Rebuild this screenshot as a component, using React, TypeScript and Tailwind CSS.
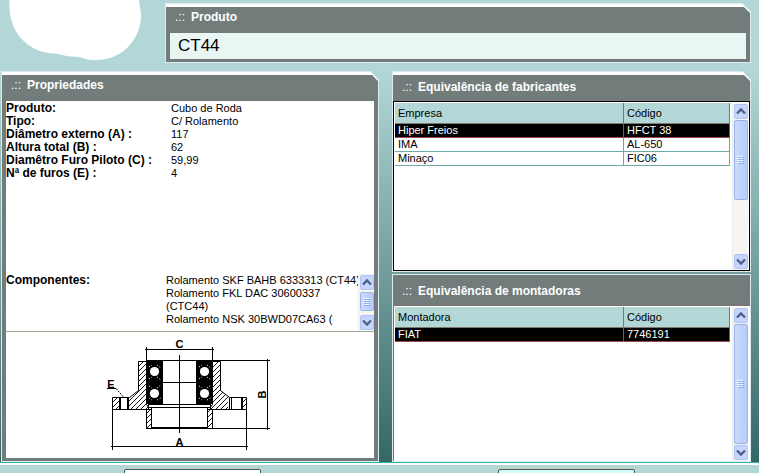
import type { ReactNode } from "react";

const outerCut =
  "[clip-path:polygon(0_0,calc(100%_-_9px)_0,100%_9px,100%_100%,0_100%)]";
const innerCut =
  "[clip-path:polygon(0_0,calc(100%_-_6px)_0,100%_6px,100%_100%,0_100%)]";

function Panel({
  id,
  title,
  cut = true,
  className = "",
  headClass = "h-[26px] pb-[6px]",
  children,
}: {
  id: string;
  title: string;
  cut?: boolean;
  className?: string;
  headClass?: string;
  children: ReactNode;
}) {
  return (
    <section
      aria-labelledby={id}
      className={`flex flex-col border border-[#dcebf2] bg-white ${cut ? `pt-[3px] ${outerCut}` : ""} ${className}`}
    >
      <div className={`flex flex-1 flex-col bg-[#727d7b] ${cut ? innerCut : ""}`}>
        <h2
          id={id}
          className={`flex shrink-0 items-center pl-[9px] text-[12px] font-bold leading-[14px] text-white ${headClass}`}
        >
          <span className="w-4 font-normal">.::</span>
          {title}
        </h2>
        {children}
      </div>
    </section>
  );
}

function Arrow({ up = false }: { up?: boolean }) {
  return (
    <button
      type="button"
      aria-label={up ? "Rolar para cima" : "Rolar para baixo"}
      className="flex h-[15px] w-[14px] shrink-0 items-center justify-center rounded-[2px] border border-[#b0c4f4] bg-[#c5d5fc]"
    >
      <svg width="10" height="7" viewBox="0 0 10 7" fill="none" stroke="#4d6185" strokeWidth="2.4">
        <path d={up ? "M1 5.5 5 1.5 9 5.5" : "M1 1.5 5 5.5 9 1.5"} />
      </svg>
    </button>
  );
}

function ScrollBar({ thumb }: { thumb: string }) {
  return (
    <div className="flex w-4 shrink-0 flex-col items-center gap-px border-l border-[#eeede5] bg-[#f6f5f1] py-px">
      <Arrow up />
      <div className="flex min-h-0 w-full flex-1 flex-col items-center">
        <div
          className={`flex w-[14px] flex-col items-center justify-center rounded-[2px] border border-[#98b4ec] bg-linear-to-r from-[#cbdafd] to-[#b8ccfa] ${thumb}`}
        >
          <svg width="7" height="8" viewBox="0 0 7 8" shapeRendering="crispEdges">
            <path d="M0 .5h6M0 2.5h6M0 4.5h6M0 6.5h6" stroke="#f0f5ff" />
            <path d="M1 1.5h6M1 3.5h6M1 5.5h6M1 7.5h6" stroke="#8caaf0" />
          </svg>
        </div>
      </div>
      <Arrow />
    </div>
  );
}

function Equivalents({ first, rows }: { first: string; rows: string[][] }) {
  return (
    <div className="min-w-0 flex-1">
      <table className="w-full table-fixed border-separate border-spacing-0 text-left text-[11px] leading-[13px]">
        <colgroup>
          <col />
          <col className="w-[106px]" />
        </colgroup>
        <thead>
          <tr className="h-[21px] bg-[#b3d6d6]">
            {[first, "Código"].map((h) => (
              <th key={h} scope="col" className="border-r border-b border-[#7d7870] p-0 pl-[3px] font-normal">
                {h}
              </th>
            ))}
          </tr>
        </thead>
        <tbody>
          {rows.map((row, i) => (
            <tr key={row[0]} className={i === 0 ? "h-[14px] bg-black text-white" : "h-[14px]"}>
              {row.map((cell) => (
                <td
                  key={cell}
                  className={`border-r border-b p-0 pl-[3px] ${i === 0 ? "border-[#a04a50]" : "border-[#6fa9a7]"}`}
                >
                  {cell}
                </td>
              ))}
            </tr>
          ))}
        </tbody>
      </table>
    </div>
  );
}

const properties = [
  ["Produto:", "Cubo de Roda"],
  ["Tipo:", "C/ Rolamento"],
  ["Diâmetro externo (A) :", "117"],
  ["Altura total (B) :", "62"],
  ["Diamêtro Furo Piloto (C) :", "59,99"],
  ["Nª de furos (E) :", "4"],
];

const components = `Rolamento SKF BAHB 6333313 (CT44)
Rolamento FKL DAC 30600337
(CTC44)
Rolamento NSK 30BWD07CA63 (`;

function HubDrawing() {
  return (
    <svg
      role="img"
      aria-label="Desenho técnico do cubo de roda"
      width="170"
      height="126"
      viewBox="105 332 170 126"
      fill="none"
      stroke="#000"
    >
      <defs>
        <pattern id="hatch" width="5" height="5" patternUnits="userSpaceOnUse">
          <path d="M-1 6 6-1M-1 1 1-1M4 6 6 4" strokeWidth="0.9" />
        </pattern>
      </defs>
      <path
        fill="url(#hatch)"
        d="M138.5 361.5h8v43l2 3v2h-36v-12h17l9-7zM220.5 361.5h-8v43l-2 3v2h36v-12h-17l-9-7z"
      />
      <path fill="url(#hatch)" d="M146.5 409.5h5v19h-5zM207.5 409.5h5v19h-5z" />
      <path fill="#fff" stroke="none" d="M119 398h10v11h-10zM228 398h14v11h-14z" />
      <path strokeWidth="2" d="M120 398v11M128 398v11M242 398v11" />
      <path d="M229.5 398v11M231.5 398v11" />
      <path fill="#000" stroke="none" d="M146 360h17v44h-17zM196 360h17v44h-17z" />
      <g fill="#fff" stroke="none">
        <circle cx="154.5" cy="371.5" r="4.6" />
        <circle cx="154.5" cy="393.5" r="4.6" />
        <circle cx="204.5" cy="371.5" r="4.6" />
        <circle cx="204.5" cy="393.5" r="4.6" />
      </g>
      <path
        stroke="#fff"
        strokeDasharray="1 2"
        d="M149 379l3-2M157 377l4 3M149 386l3 2M157 388l4-3M199 379l3-2M207 377l4 3M199 386l3 2M207 388l4-3M149 367l3-2M157 365l4 3M199 367l3-2M207 365l4 3M149 398l3 2M157 400l4-2M199 398l3 2M207 400l4-2"
      />
      <g shapeRendering="crispEdges">
        <path fill="#fff" d="M148.5 404.5h62v3h-62z" />
        <path d="M151.5 407.5h56v20h-56zM146 428.5h124M146 360.5h124M162 382.5h34M179.5 355v78" />
        <path d="M145 349.5h69M146.5 347v14M212.5 347v14" />
        <path d="M267.5 359v71M112.5 409v41M246.5 409v41M111 446.5h137" />
        <path d="M107 388.5h9" />
      </g>
      <path d="M116 388.5l8 9" strokeDasharray="2 1" />
      <g
        fill="#000"
        stroke="none"
        fontFamily="'Liberation Sans', Arial, sans-serif"
        fontSize="11"
        fontWeight="700"
        textAnchor="middle"
      >
        <text x="179.5" y="348">C</text>
        <text x="179.5" y="446">A</text>
        <text x="111" y="388">E</text>
        <text transform="translate(266 394.5) rotate(-90)">B</text>
      </g>
    </svg>
  );
}

export default function App() {
  return (
    <div className="flex min-h-screen flex-col overflow-hidden bg-[linear-gradient(to_bottom,#b3d7d7_0,#b3d7d7_70px,#356766_462px)] font-['Liberation_Sans',Arial,sans-serif] text-black">
      <header className="flex items-start pt-[3px] pr-2 pb-2">
        <div className="-mt-[3px] w-[165px] shrink-0">
          <svg width="150" height="62" viewBox="0 0 150 62" aria-hidden="true">
            <path
              fill="#fff"
              d="M9.500 0C7 31 28 53 54 53.500C62 54 65 57 80 57C86 60 92 60 98 60C124 59 141 38 141 15L139 0Z"
            />
          </svg>
        </div>
        <Panel id="produto" title="Produto" className="flex-1">
          <input
            aria-labelledby="produto"
            readOnly
            value="CT44"
            className="mx-1 mb-[3px] h-[26px] bg-[#e9f6f4] px-2 text-[17px] outline-none"
          />
        </Panel>
      </header>

      <main className="grid flex-1 grid-cols-[378fr_359fr] gap-x-[13px] pr-2 pl-px">
        <Panel id="propriedades" title="Propriedades" className="min-w-0">
          <div className="mx-1 mb-[3px] flex flex-1 flex-col bg-white text-[11px] leading-[13px]">
            <dl className="grid h-[173px] grid-cols-[165px_1fr] content-start pt-px">
              {properties.map(([name, value]) => (
                <div key={name} className="contents">
                  <dt className="text-[12px] font-bold whitespace-nowrap">{name}</dt>
                  <dd>{value}</dd>
                </div>
              ))}
            </dl>
            <div className="flex border-b border-[#a6a794]">
              <label htmlFor="componentes" className="w-40 shrink-0 text-[12px] font-bold">
                Componentes:
              </label>
              <textarea
                id="componentes"
                readOnly
                rows={4}
                value={components}
                className="h-[57px] min-w-0 flex-1 resize-none overflow-hidden whitespace-pre outline-none"
              />
              <ScrollBar thumb="mt-px h-[19px]" />
            </div>
            <div className="flex justify-center">
              <HubDrawing />
            </div>
          </div>
        </Panel>

        <div className="flex min-w-0 flex-col gap-[2px]">
          <Panel id="fabricantes" title="Equivalência de fabricantes" headClass="h-[26px] pb-[2px]">
            <div className="flex h-[170px] border border-black bg-white pt-px pl-px">
              <Equivalents
                first="Empresa"
                rows={[
                  ["Hiper Freios", "HFCT 38"],
                  ["IMA", "AL-650"],
                  ["Minaço", "FIC06"],
                ]}
              />
              <div className="flex pr-px pl-[2px]">
                <ScrollBar thumb="h-[80px]" />
              </div>
            </div>
          </Panel>
          <Panel
            id="montadoras"
            title="Equivalência de montadoras"
            cut={false}
            className="flex-1"
            headClass="h-[30px] pt-[2px]"
          >
            <div className="flex flex-1 border-t border-l border-[#7d6f68] bg-white pt-px pl-px">
              <Equivalents first="Montadora" rows={[["FIAT", "7746191"]]} />
              <div className="flex pr-[2px] pl-[2px]">
                <ScrollBar thumb="h-full" />
              </div>
            </div>
          </Panel>
        </div>
      </main>

      <footer className="flex h-[11px] justify-between overflow-hidden border-t border-[#35b39c] bg-[#b3d7d7] px-[124px] shadow-[inset_0_2px_0_#fff]">
        <button
          type="button"
          aria-label="Voltar"
          className="mt-[6px] h-6 w-[137px] rounded-[2px] border border-[#36616b] bg-white shadow-[0_-1px_0_#d9c9a8]"
        />
        <button
          type="button"
          aria-label="Imprimir"
          className="mt-[6px] h-6 w-[137px] rounded-[2px] border border-[#36616b] bg-[#d3fcfa] shadow-[0_-1px_0_#d9c9a8]"
        />
      </footer>
    </div>
  );
}
